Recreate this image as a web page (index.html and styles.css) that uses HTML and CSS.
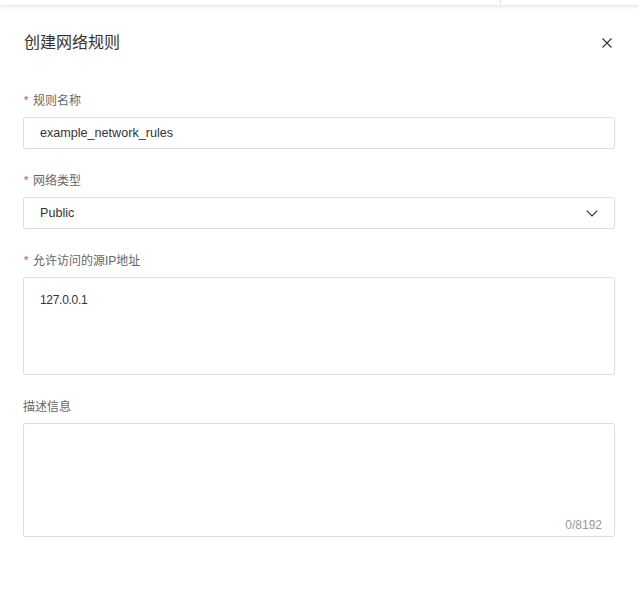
FILE: index.html
```html
<!DOCTYPE html>
<html lang="zh-CN">
<head>
<meta charset="utf-8">
<title>创建网络规则</title>
<link rel="stylesheet" href="styles.css">
</head>
<body>
<div class="topbar">
  <div class="topbar-cell"></div>
  <div class="topbar-rest"></div>
</div>
<div class="drawer">
  <div class="header">
    <div class="title">创建网络规则</div>
    <button class="close" aria-label="关闭">
      <svg width="10" height="10" viewBox="0 0 10 10"><path d="M0.5 0.5L9.5 9.5M9.5 0.5L0.5 9.5" stroke="#333" stroke-width="1.1" fill="none"/></svg>
    </button>
  </div>
  <div class="form">
    <div class="field">
      <div class="label"><span class="req">*</span>规则名称</div>
      <div class="input">example_network_rules</div>
    </div>
    <div class="field">
      <div class="label"><span class="req">*</span>网络类型</div>
      <div class="input select">
        <span>Public</span>
        <svg class="chev" width="12" height="7" viewBox="0 0 12 7"><path d="M0.7 0.7L6 6L11.3 0.7" stroke="#333" stroke-width="1.2" fill="none"/></svg>
      </div>
    </div>
    <div class="field">
      <div class="label"><span class="req">*</span>允许访问的源IP地址</div>
      <div class="textarea ip">127.0.0.1</div>
    </div>
    <div class="field">
      <div class="label">描述信息</div>
      <div class="textarea desc"><span class="count">0/8192</span></div>
    </div>
  </div>
</div>
</body>
</html>
```
FILE: styles.css
```css
* { box-sizing: border-box; }
body {
  margin: 0;
  background: #fff;
  font-family: "Liberation Sans", Roboto, "Noto Sans CJK SC", sans-serif;
  color: #333;
}
.topbar {
  display: flex;
  height: 5px;
  background: #fff;
  box-shadow: 0 1px 4px rgba(0,0,0,0.14);
  position: relative;
}
.topbar-cell {
  width: 501px;
  border-right: 1px solid #e3e3e3;
}
.topbar-rest { flex: 1; }
.drawer {
  padding: 0 24px 0 23px;
}
.header {
  height: 72px;
  display: flex;
  align-items: center;
  justify-content: space-between;
}
.title {
  font-size: 16px;
  line-height: 20px;
  color: #333;
  font-family: "Noto Sans CJK SC", sans-serif;
  padding-left: 1px;
}
.close {
  width: 16px;
  height: 16px;
  padding: 0;
  border: 0;
  background: none;
  display: flex;
  align-items: center;
  justify-content: center;
  margin-top: 3px;
}
.form {
  padding-top: 16px;
  display: flex;
  flex-direction: column;
  gap: 24px;
}
.field {
  display: flex;
  flex-direction: column;
  gap: 8px;
}
.label {
  font-size: 12px;
  line-height: 16px;
  color: #666;
  font-family: "Liberation Sans", "Noto Sans CJK SC", sans-serif;
  display: flex;
  align-items: center;
}
.req {
  color: #e33;
  font-size: 11px;
  width: 10px;
  padding-left: 1px;
  position: relative;
  top: -1px;
}
.input {
  height: 32px;
  border: 1px solid #dedede;
  border-radius: 2px;
  padding: 0 16px;
  font-size: 12.6px;
  display: flex;
  align-items: center;
  color: #333;
}
.select {
  justify-content: space-between;
  padding-right: 16px;
}
.chev { display: block; }
.textarea {
  border: 1px solid #dedede;
  border-radius: 2px;
  padding: 13px 16px;
  font-size: 12.6px;
  line-height: 18px;
  color: #333;
}
.ip {
  height: 98px;
  font-size: 12px;
  letter-spacing: -0.3px;
}
.desc {
  height: 114px;
  display: flex;
  align-items: flex-end;
  justify-content: flex-end;
  padding: 0 12px 3px;
}
.count {
  font-size: 12px;
  line-height: 16px;
  color: #999;
}
```
